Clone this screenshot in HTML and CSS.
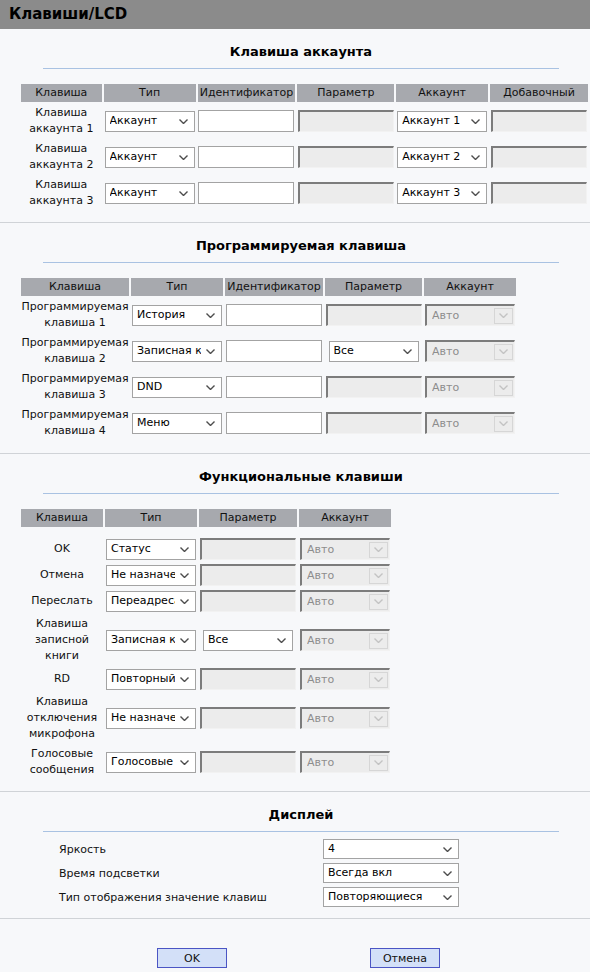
FILE: index.html
```html
<!DOCTYPE html>
<html lang="ru">
<head>
<meta charset="utf-8">
<title>Клавиши/LCD</title>
<link rel="stylesheet" href="styles.css">
</head>
<body>
<div class="titlebar">Клавиши/LCD</div>

<section class="sec sec-acc">
  <h2 class="sec-title">Клавиша аккаунта</h2>
  <table class="grid">
    <thead>
      <tr><th class="w82">Клавиша</th><th class="w92">Тип</th><th class="w98">Идентификатор</th><th class="w97">Параметр</th><th class="w92">Аккаунт</th><th class="w98">Добавочный</th></tr>
    </thead>
    <tbody>
      <tr>
        <td>Клавиша<br>аккаунта 1</td>
        <td><div class="sel"><span class="sel-v">Аккаунт</span><svg class="chev" viewBox="0 0 9 5"><polyline points="0.5,0.5 4.5,4.5 8.5,0.5"/></svg></div></td>
        <td><input type="text" class="inp"></td>
        <td><input type="text" class="inp-dis" disabled></td>
        <td><div class="sel"><span class="sel-v">Аккаунт 1</span><svg class="chev" viewBox="0 0 9 5"><polyline points="0.5,0.5 4.5,4.5 8.5,0.5"/></svg></div></td>
        <td><input type="text" class="inp-dis" disabled></td>
      </tr>
      <tr>
        <td>Клавиша<br>аккаунта 2</td>
        <td><div class="sel"><span class="sel-v">Аккаунт</span><svg class="chev" viewBox="0 0 9 5"><polyline points="0.5,0.5 4.5,4.5 8.5,0.5"/></svg></div></td>
        <td><input type="text" class="inp"></td>
        <td><input type="text" class="inp-dis" disabled></td>
        <td><div class="sel"><span class="sel-v">Аккаунт 2</span><svg class="chev" viewBox="0 0 9 5"><polyline points="0.5,0.5 4.5,4.5 8.5,0.5"/></svg></div></td>
        <td><input type="text" class="inp-dis" disabled></td>
      </tr>
      <tr>
        <td>Клавиша<br>аккаунта 3</td>
        <td><div class="sel"><span class="sel-v">Аккаунт</span><svg class="chev" viewBox="0 0 9 5"><polyline points="0.5,0.5 4.5,4.5 8.5,0.5"/></svg></div></td>
        <td><input type="text" class="inp"></td>
        <td><input type="text" class="inp-dis" disabled></td>
        <td><div class="sel"><span class="sel-v">Аккаунт 3</span><svg class="chev" viewBox="0 0 9 5"><polyline points="0.5,0.5 4.5,4.5 8.5,0.5"/></svg></div></td>
        <td><input type="text" class="inp-dis" disabled></td>
      </tr>
    </tbody>
  </table>
</section>

<section class="sec sec-prog">
  <h2 class="sec-title">Программируемая клавиша</h2>
  <table class="grid">
    <thead>
      <tr><th class="w108">Клавиша</th><th class="w92">Тип</th><th class="w98">Идентификатор</th><th class="w97">Параметр</th><th class="w92">Аккаунт</th></tr>
    </thead>
    <tbody>
      <tr>
        <td>Программируемая<br>клавиша 1</td>
        <td><div class="sel"><span class="sel-v">История</span><svg class="chev" viewBox="0 0 9 5"><polyline points="0.5,0.5 4.5,4.5 8.5,0.5"/></svg></div></td>
        <td><input type="text" class="inp"></td>
        <td><input type="text" class="inp-dis" disabled></td>
        <td><div class="sel-dis"><span class="sel-v">Авто</span><span class="box"><svg class="chev" viewBox="0 0 9 5"><polyline points="0.5,0.5 4.5,4.5 8.5,0.5"/></svg></span></div></td>
      </tr>
      <tr>
        <td>Программируемая<br>клавиша 2</td>
        <td><div class="sel"><span class="sel-v">Записная книга</span><svg class="chev" viewBox="0 0 9 5"><polyline points="0.5,0.5 4.5,4.5 8.5,0.5"/></svg></div></td>
        <td><input type="text" class="inp"></td>
        <td><div class="sel"><span class="sel-v">Все</span><svg class="chev" viewBox="0 0 9 5"><polyline points="0.5,0.5 4.5,4.5 8.5,0.5"/></svg></div></td>
        <td><div class="sel-dis"><span class="sel-v">Авто</span><span class="box"><svg class="chev" viewBox="0 0 9 5"><polyline points="0.5,0.5 4.5,4.5 8.5,0.5"/></svg></span></div></td>
      </tr>
      <tr>
        <td>Программируемая<br>клавиша 3</td>
        <td><div class="sel"><span class="sel-v">DND</span><svg class="chev" viewBox="0 0 9 5"><polyline points="0.5,0.5 4.5,4.5 8.5,0.5"/></svg></div></td>
        <td><input type="text" class="inp"></td>
        <td><input type="text" class="inp-dis" disabled></td>
        <td><div class="sel-dis"><span class="sel-v">Авто</span><span class="box"><svg class="chev" viewBox="0 0 9 5"><polyline points="0.5,0.5 4.5,4.5 8.5,0.5"/></svg></span></div></td>
      </tr>
      <tr>
        <td>Программируемая<br>клавиша 4</td>
        <td><div class="sel"><span class="sel-v">Меню</span><svg class="chev" viewBox="0 0 9 5"><polyline points="0.5,0.5 4.5,4.5 8.5,0.5"/></svg></div></td>
        <td><input type="text" class="inp"></td>
        <td><input type="text" class="inp-dis" disabled></td>
        <td><div class="sel-dis"><span class="sel-v">Авто</span><span class="box"><svg class="chev" viewBox="0 0 9 5"><polyline points="0.5,0.5 4.5,4.5 8.5,0.5"/></svg></span></div></td>
      </tr>
    </tbody>
  </table>
</section>

<section class="sec sec-func">
  <h2 class="sec-title">Функциональные клавиши</h2>
  <table class="grid">
    <thead>
      <tr><th class="w82">Клавиша</th><th class="w92">Тип</th><th class="w98">Параметр</th><th class="w92">Аккаунт</th></tr>
    </thead>
    <tbody>
      <tr class="spacer"><td colspan="4"></td></tr>
      <tr>
        <td>OK</td>
        <td><div class="sel"><span class="sel-v">Статус</span><svg class="chev" viewBox="0 0 9 5"><polyline points="0.5,0.5 4.5,4.5 8.5,0.5"/></svg></div></td>
        <td><input type="text" class="inp-dis" disabled></td>
        <td><div class="sel-dis"><span class="sel-v">Авто</span><span class="box"><svg class="chev" viewBox="0 0 9 5"><polyline points="0.5,0.5 4.5,4.5 8.5,0.5"/></svg></span></div></td>
      </tr>
      <tr>
        <td>Отмена</td>
        <td><div class="sel"><span class="sel-v">Не назначено</span><svg class="chev" viewBox="0 0 9 5"><polyline points="0.5,0.5 4.5,4.5 8.5,0.5"/></svg></div></td>
        <td><input type="text" class="inp-dis" disabled></td>
        <td><div class="sel-dis"><span class="sel-v">Авто</span><span class="box"><svg class="chev" viewBox="0 0 9 5"><polyline points="0.5,0.5 4.5,4.5 8.5,0.5"/></svg></span></div></td>
      </tr>
      <tr>
        <td>Переслать</td>
        <td><div class="sel"><span class="sel-v">Переадресация</span><svg class="chev" viewBox="0 0 9 5"><polyline points="0.5,0.5 4.5,4.5 8.5,0.5"/></svg></div></td>
        <td><input type="text" class="inp-dis" disabled></td>
        <td><div class="sel-dis"><span class="sel-v">Авто</span><span class="box"><svg class="chev" viewBox="0 0 9 5"><polyline points="0.5,0.5 4.5,4.5 8.5,0.5"/></svg></span></div></td>
      </tr>
      <tr>
        <td>Клавиша<br>записной<br>книги</td>
        <td><div class="sel"><span class="sel-v">Записная книга</span><svg class="chev" viewBox="0 0 9 5"><polyline points="0.5,0.5 4.5,4.5 8.5,0.5"/></svg></div></td>
        <td><div class="sel"><span class="sel-v">Все</span><svg class="chev" viewBox="0 0 9 5"><polyline points="0.5,0.5 4.5,4.5 8.5,0.5"/></svg></div></td>
        <td><div class="sel-dis"><span class="sel-v">Авто</span><span class="box"><svg class="chev" viewBox="0 0 9 5"><polyline points="0.5,0.5 4.5,4.5 8.5,0.5"/></svg></span></div></td>
      </tr>
      <tr>
        <td>RD</td>
        <td><div class="sel"><span class="sel-v">Повторный набор</span><svg class="chev" viewBox="0 0 9 5"><polyline points="0.5,0.5 4.5,4.5 8.5,0.5"/></svg></div></td>
        <td><input type="text" class="inp-dis" disabled></td>
        <td><div class="sel-dis"><span class="sel-v">Авто</span><span class="box"><svg class="chev" viewBox="0 0 9 5"><polyline points="0.5,0.5 4.5,4.5 8.5,0.5"/></svg></span></div></td>
      </tr>
      <tr>
        <td>Клавиша<br>отключения<br>микрофона</td>
        <td><div class="sel"><span class="sel-v">Не назначено</span><svg class="chev" viewBox="0 0 9 5"><polyline points="0.5,0.5 4.5,4.5 8.5,0.5"/></svg></div></td>
        <td><input type="text" class="inp-dis" disabled></td>
        <td><div class="sel-dis"><span class="sel-v">Авто</span><span class="box"><svg class="chev" viewBox="0 0 9 5"><polyline points="0.5,0.5 4.5,4.5 8.5,0.5"/></svg></span></div></td>
      </tr>
      <tr>
        <td>Голосовые<br>сообщения</td>
        <td><div class="sel"><span class="sel-v">Голосовые сообщения</span><svg class="chev" viewBox="0 0 9 5"><polyline points="0.5,0.5 4.5,4.5 8.5,0.5"/></svg></div></td>
        <td><input type="text" class="inp-dis" disabled></td>
        <td><div class="sel-dis"><span class="sel-v">Авто</span><span class="box"><svg class="chev" viewBox="0 0 9 5"><polyline points="0.5,0.5 4.5,4.5 8.5,0.5"/></svg></span></div></td>
      </tr>
    </tbody>
  </table>
</section>

<section class="sec sec-disp">
  <h2 class="sec-title">Дисплей</h2>
  <div class="disp">
    <span>Яркость</span>
    <div class="sel sel-wide"><span class="sel-v">4</span><svg class="chev" viewBox="0 0 9 5"><polyline points="0.5,0.5 4.5,4.5 8.5,0.5"/></svg></div>
    <span>Время подсветки</span>
    <div class="sel sel-wide"><span class="sel-v">Всегда вкл</span><svg class="chev" viewBox="0 0 9 5"><polyline points="0.5,0.5 4.5,4.5 8.5,0.5"/></svg></div>
    <span>Тип отображения значение клавиш</span>
    <div class="sel sel-wide"><span class="sel-v">Повторяющиеся</span><svg class="chev" viewBox="0 0 9 5"><polyline points="0.5,0.5 4.5,4.5 8.5,0.5"/></svg></div>
  </div>
</section>

<section class="sec sec-actions">
  <div class="actions">
    <button type="button" class="btn">OK</button>
    <button type="button" class="btn">Отмена</button>
  </div>
</section>
</body>
</html>
```

FILE: styles.css
```css
html {
  overflow: hidden;
}

body {
  margin: 0;
  background: #f7f8fa;
  font-family: "DejaVu Sans", "Noto Sans", sans-serif;
  font-size: 11px;
  color: #111;
}

.titlebar {
  height: 29px;
  line-height: 29px;
  padding-left: 9px;
  background: #8b8b8b;
  color: #000;
  font-size: 15px;
  font-weight: bold;
}

.sec + .sec {
  border-top: 1px solid #d0d3d7;
}

.sec-acc { padding-bottom: 10px; }
.sec-prog { padding-bottom: 11px; }
.sec-func { padding-bottom: 10px; }
.sec-disp { padding-bottom: 9px; }

.sec-title {
  margin: 0 0 0 43px;
  width: 516px;
  padding: 14px 0 7px;
  border-bottom: 1px solid #a9c2e2;
  text-align: center;
  font-size: 13px;
  line-height: 18px;
  font-weight: bold;
  color: #000;
}

.grid {
  border-collapse: separate;
  border-spacing: 2px;
  margin: 13px 0 0 19px;
}

.grid th {
  height: 18px;
  padding: 0;
  background: #a7a9ae;
  font-weight: normal;
  line-height: 18px;
  white-space: nowrap;
  color: #111;
}

.grid td {
  padding: 1px 0;
  text-align: center;
  line-height: 16px;
  white-space: nowrap;
}

.grid .spacer td {
  height: 6px;
  padding: 0;
}

.w82 { width: 82px; }
.w92 { width: 92px; }
.w97 { width: 97px; }
.w98 { width: 98px; }
.w108 { width: 108px; }

.sel {
  display: flex;
  align-items: center;
  box-sizing: border-box;
  width: 90px;
  height: 21px;
  margin: 0 auto;
  padding-left: 4px;
  border: 1px solid #a3a3a3;
  background: #fff;
  color: #000;
}

.sel-v {
  flex: 1;
  min-width: 0;
  overflow: hidden;
  white-space: nowrap;
  text-align: left;
  line-height: 16px;
}

.chev {
  flex: none;
  width: 9px;
  height: 5px;
  margin: 0 6px 0 5px;
  fill: none;
  stroke: #4d4d4d;
  stroke-width: 1.4;
}

.sel-dis {
  display: flex;
  align-items: center;
  box-sizing: border-box;
  width: 90px;
  height: 22px;
  margin: 0 auto;
  padding-left: 5px;
  border-top: 2px solid #7c7c7c;
  border-left: 2px solid #7c7c7c;
  border-right: 1px solid #f2f2f2;
  border-bottom: 1px solid #f2f2f2;
  background: #ececec;
  color: #8d8d8d;
}

.sel-dis .box {
  display: flex;
  align-items: center;
  justify-content: center;
  box-sizing: border-box;
  flex: none;
  width: 19px;
  height: 16px;
  margin-right: 1px;
  border: 1px solid #d6d6d6;
}

.sel-dis .chev {
  margin: 0;
  stroke: #c3c3c3;
}

.inp {
  display: block;
  box-sizing: border-box;
  width: 96px;
  height: 22px;
  margin: 0 auto;
  padding: 0;
  border: 1px solid #a3a3a3;
  background: #fff;
}

.inp-dis {
  display: block;
  box-sizing: border-box;
  width: 96px;
  height: 22px;
  margin: 0 auto;
  padding: 0;
  border-top: 2px solid #7c7c7c;
  border-left: 2px solid #7c7c7c;
  border-right: 1px solid #f2f2f2;
  border-bottom: 1px solid #f2f2f2;
  background: #ececec;
}

.disp {
  display: grid;
  grid-template-columns: 264px 136px;
  grid-auto-rows: 24px;
  align-items: center;
  margin: 5px 0 0 59px;
}

.sel-wide {
  width: 136px;
  height: 20px;
  margin: 0;
}

.actions {
  display: flex;
  gap: 143px;
  padding: 29px 0 0 157px;
}

.btn {
  box-sizing: border-box;
  width: 70px;
  height: 20px;
  padding: 0;
  border: 1px solid #4b55c4;
  background: #d3e0f8;
  color: #111;
  font-family: inherit;
  font-size: 11px;
}
```
